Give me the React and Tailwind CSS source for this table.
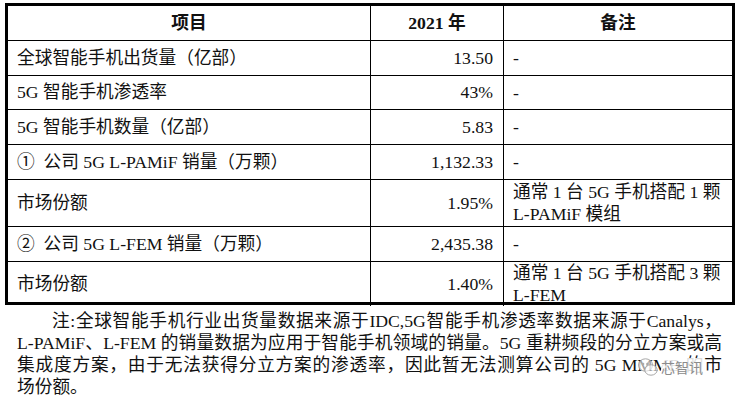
export default function App() {
  const rows = [
    { name: '全球智能手机出货量（亿部）', value: '13.50', note: '-', h: 'h-[35px]' },
    { name: '5G 智能手机渗透率', value: '43%', note: '-', h: 'h-[34px]' },
    { name: '5G 智能手机数量（亿部）', value: '5.83', note: '-', h: 'h-[35px]' },
    { name: '①  公司 5G L-PAMiF 销量（万颗）', value: '1,132.33', note: '-', h: 'h-[35px]' },
    { name: '市场份额', value: '1.95%', note: ['通常 1 台 5G 手机搭配 1 颗', 'L-PAMiF 模组'], h: 'h-[47px]' },
    { name: '②  公司 5G L-FEM 销量（万颗）', value: '2,435.38', note: '-', h: 'h-[35px]' },
    { name: '市场份额', value: '1.40%', note: ['通常 1 台 5G 手机搭配 3 颗', 'L-FEM'], h: 'h-[40px]', last: true },
  ]

  return (
    <div
      className="w-[738px] h-[401px] bg-white pl-[5px] pt-[3px] text-[17.7px] text-[#111]"
      style={{ fontFamily: '"Liberation Serif", "Noto Sans CJK SC", serif' }}
    >
      {/* 表格 */}
      <div className="w-[730px] border-[3px] border-black">
        <div className="grid h-[35px] grid-cols-[363px_133px_1fr] border-b border-black font-bold">
          <div className="flex items-center justify-center border-r border-black">项目</div>
          <div className="flex items-center justify-center border-r border-black">2021 年</div>
          <div className="flex items-center justify-center">备注</div>
        </div>
        {rows.map((r, i) => (
          <div
            key={i}
            className={`grid grid-cols-[363px_133px_1fr] ${r.h} ${r.last ? '' : 'border-b border-black'}`}
          >
            <div className="flex items-center whitespace-pre border-r border-black pl-[9px]">{r.name}</div>
            <div className="flex items-center justify-end border-r border-black pr-[10px]">{r.value}</div>
            <div className="flex flex-col justify-center whitespace-nowrap pl-[9px] leading-[22px]">
              {Array.isArray(r.note) ? r.note.map((l, j) => <div key={j}>{l}</div>) : <div>{r.note}</div>}
            </div>
          </div>
        ))}
      </div>

      {/* 注释 */}
      <div className="relative mt-[5px] w-[717px] pl-[12px] leading-[22px]">
        <div className="pl-[35px] text-justify [text-align-last:justify]">
          注:全球智能手机行业出货量数据来源于IDC,5G智能手机渗透率数据来源于Canalys，
        </div>
        <div className="text-justify [text-align-last:justify]">
          L-PAMiF、L-FEM 的销量数据为应用于智能手机领域的销量。5G 重耕频段的分立方案或高
        </div>
        <div className="text-justify [text-align-last:justify]">
          集成度方案，由于无法获得分立方案的渗透率，因此暂无法测算公司的 5G MMMB 的市
        </div>
        <div>场份额。</div>

        {/* 水印 */}
        <div className="absolute left-[632px] top-[46px] flex items-center gap-[2px] whitespace-nowrap text-[#8c8c8c]">
          <svg width="22" height="22" viewBox="0 0 22 22" fill="none" stroke="#a8a8a8" strokeWidth="1">
            <ellipse cx="8.5" cy="9" rx="7" ry="6.2" fill="rgba(255,255,255,0.6)" />
            <ellipse cx="14" cy="14" rx="6.2" ry="5.2" fill="rgba(255,255,255,0.6)" />
            <circle cx="6" cy="8" r="0.9" fill="#a8a8a8" />
            <circle cx="10.5" cy="8" r="0.9" fill="#a8a8a8" />
          </svg>
          <span
            className="bg-white/85 text-[14px] leading-[18px]"
            style={{ fontFamily: '"Noto Sans CJK SC", sans-serif' }}
          >
            芯智讯
          </span>
        </div>
      </div>
    </div>
  )
}
